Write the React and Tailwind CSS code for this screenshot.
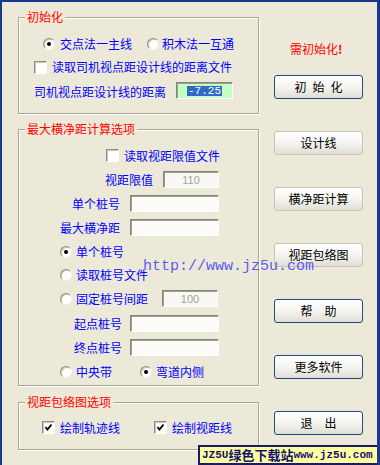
import React from 'react';

const cjk = "font-['Noto_Sans_CJK_SC','Liberation_Sans',sans-serif]";

const Group = ({ title, className = '', children }) => (
  <div className={`relative border border-[#ACA899] shadow-[inset_1px_1px_0_#fff,1px_1px_0_#fff] ${className}`}>
    <span className="absolute left-[6px] top-[-8px] bg-[#ECE9D8] px-[2px] leading-[14px] text-[#FF0000]">{title}</span>
    {children}
  </div>
);

const Radio = ({ checked }) => (
  <span className="flex h-[12px] w-[12px] shrink-0 items-center justify-center rounded-full border border-t-[#8E8E84] border-l-[#8E8E84] border-b-[#F4F4F0] border-r-[#F4F4F0] bg-white shadow-[inset_1px_1px_0_#C9C7BA]">
    {checked && <span className="h-[4px] w-[4px] rounded-full bg-black" />}
  </span>
);

const Check = ({ checked }) => (
  <span className="flex h-[13px] w-[13px] shrink-0 items-center justify-center border border-t-[#8E8E84] border-l-[#8E8E84] border-b-white border-r-white bg-white shadow-[inset_1px_1px_0_#C9C7BA]">
    {checked && (
      <svg width="9" height="9" viewBox="0 0 9 9">
        <polyline points="1.5,4 3.5,6.5 7.5,1.5" fill="none" stroke="#000" strokeWidth="1.8" />
      </svg>
    )}
  </span>
);

const Field = ({ className = '', children }) => (
  <div className={`flex h-[17px] shrink-0 items-center justify-center border border-t-[#85857A] border-l-[#85857A] border-b-white border-r-white shadow-[inset_1px_1px_0_#9E9D90] ${className}`}>
    {children}
  </div>
);

const Btn = ({ gray, children }) => (
  <button
    type="button"
    className={`flex h-[24px] w-[89px] items-center justify-center rounded-[3px] border bg-linear-to-b from-white via-[#F4F4F0] to-[#E0DED4] text-[12px] text-black ${gray ? 'border-[#C6C4B8]' : 'border-[#1C4C84]'}`}
  >
    {children}
  </button>
);

export default function App() {
  return (
    <div className={`relative flex h-[465px] w-[380px] overflow-hidden border-l-2 border-t-2 border-r-[3px] border-[#183A8C] bg-[#ECE9D8] text-[12px] leading-[14px] text-[#0000FF] ${cjk}`}>
      {/* 左侧分组 */}
      <div className="ml-[16px] flex w-[241px] shrink-0 flex-col pt-[15px]">
        <Group title="初始化" className="pb-[14px]">
          <div className="mt-[19px] flex h-[14px] items-center pl-[24px]">
            <Radio checked />
            <span className="ml-[5px]">交点法一主线</span>
            <span className="ml-[15px]"><Radio /></span>
            <span className="ml-[3px]">积木法一互通</span>
          </div>
          <div className="mt-[9px] flex h-[14px] items-center pl-[15px]">
            <Check />
            <span className="ml-[5px]">读取司机视点距设计线的距离文件</span>
          </div>
          <div className="mt-[8px] flex h-[17px] items-center pl-[15px]">
            <span className="pt-[2px]">司机视点距设计线的距离</span>
            <Field className="ml-[10px] w-[57px] bg-[#C4FFC4]">
              <span className="bg-[#316AC5] px-[1px] font-['Liberation_Mono',monospace] text-[11px] leading-[10px] text-white">-7.25</span>
            </Field>
          </div>
        </Group>

        <Group title="最大横净距计算选项" className="mt-[15px] pb-[7px]">
          <div className="mt-[19px] flex h-[13px] items-center pl-[87px]">
            <Check />
            <span className="ml-[5px]">读取视距限值文件</span>
          </div>
          <div className="mt-[9px] flex h-[17px] items-center pl-[86px]">
            <span className="w-[48px]">视距限值</span>
            <Field className="ml-[10px] w-[56px] bg-[#F8F8F4]">
              <span className="font-['Liberation_Sans',sans-serif] text-[11px] text-[#A3A39B]">110</span>
            </Field>
          </div>
          <div className="mt-[7px] flex h-[17px] items-center pl-[53px]">
            <span className="w-[48px]">单个桩号</span>
            <Field className="ml-[10px] w-[89px] bg-[#FBFBF8]" />
          </div>
          <div className="mt-[7px] flex h-[17px] items-center pl-[41px]">
            <span className="w-[60px]">最大横净距</span>
            <Field className="ml-[10px] w-[89px] bg-[#FBFBF8]" />
          </div>
          <div className="mt-[9px] flex h-[13px] items-center pl-[41px]">
            <Radio checked />
            <span className="ml-[4px]">单个桩号</span>
          </div>
          <div className="mt-[10px] flex h-[13px] items-center pl-[41px]">
            <Radio />
            <span className="ml-[4px]">读取桩号文件</span>
          </div>
          <div className="mt-[9px] flex h-[17px] items-center pl-[41px]">
            <Radio />
            <span className="ml-[4px] w-[72px]">固定桩号间距</span>
            <Field className="ml-[14px] w-[56px] bg-[#F8F8F4]">
              <span className="font-['Liberation_Sans',sans-serif] text-[11px] text-[#A3A39B]">100</span>
            </Field>
          </div>
          <div className="mt-[8px] flex h-[17px] items-center pl-[55px]">
            <span className="w-[48px]">起点桩号</span>
            <Field className="ml-[8px] w-[89px] bg-[#FBFBF8]" />
          </div>
          <div className="mt-[7px] flex h-[17px] items-center pl-[55px]">
            <span className="w-[48px]">终点桩号</span>
            <Field className="ml-[8px] w-[89px] bg-[#FBFBF8]" />
          </div>
          <div className="mt-[9px] flex h-[13px] items-center pl-[41px]">
            <Radio />
            <span className="ml-[4px] w-[36px]">中央带</span>
            <span className="ml-[28px]"><Radio checked /></span>
            <span className="ml-[4px]">弯道内侧</span>
          </div>
        </Group>

        <Group title="视距包络图选项" className="mt-[16px] pb-[15px]">
          <div className="mt-[18px] flex h-[13px] items-center pl-[23px]">
            <Check checked />
            <span className="ml-[5px] w-[60px]">绘制轨迹线</span>
            <span className="ml-[34px]"><Check checked /></span>
            <span className="ml-[5px]">绘制视距线</span>
          </div>
        </Group>
      </div>

      {/* 右侧按钮 */}
      <div className="ml-[15px] flex w-[89px] shrink-0 flex-col pt-[40px]">
        <span className="pl-[16px] text-[#FF0000]">
          需初始化<b className="font-bold">!</b>
        </span>
        <div className="mt-[19px] flex flex-col gap-[32px]">
          <Btn>
            <span className="flex gap-[6px]"><span>初</span><span>始</span><span>化</span></span>
          </Btn>
          <Btn gray>设计线</Btn>
          <Btn gray>横净距计算</Btn>
          <Btn gray>视距包络图</Btn>
          <Btn>
            <span className="flex gap-[12px]"><span>帮</span><span>助</span></span>
          </Btn>
          <Btn>更多软件</Btn>
          <Btn>
            <span className="flex gap-[12px]"><span>退</span><span>出</span></span>
          </Btn>
        </div>
      </div>

      {/* 水印 */}
      <span className="pointer-events-none absolute left-[141px] top-[257px] font-['Liberation_Mono',monospace] text-[15px] leading-[16px] text-[#5C5CF2]">
        http://www.jz5u.com
      </span>
      <div className="absolute bottom-0 right-[-3px] flex h-[20px] w-[182px] items-center whitespace-nowrap border-2 border-[#1A1A66] bg-[#FFFFA0] pl-[2px] font-bold leading-[14px] text-[#14146E]">
        <span className="font-['Liberation_Mono',monospace] text-[11px]">JZ5U</span>
        <span className={`${cjk} text-[13px]`}>绿色下载站</span>
        <span className="font-['Liberation_Mono',monospace] text-[11px]">www.jz5u.com</span>
      </div>
    </div>
  );
}
